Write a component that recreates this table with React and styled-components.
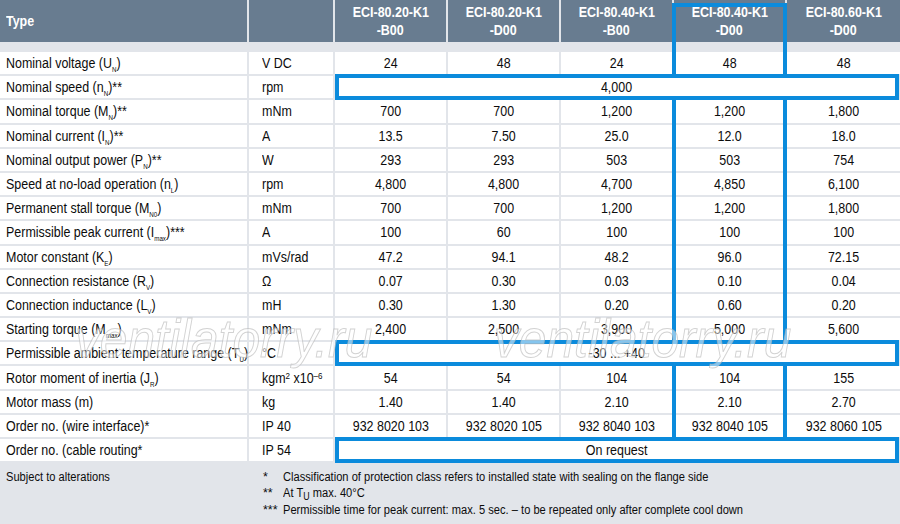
import React from "react";
import styled, { createGlobalStyle } from "styled-components";

const GlobalStyle = createGlobalStyle`
  html, body {
    margin: 0;
    padding: 0;
    background: #ffffff;
  }
  body {
    font-family: "Liberation Sans", Arial, sans-serif;
    color: #0c0c0c;
  }
`;

const BLUE = "#0b8bdc";
const GRID = "#e2e5ea";
const SLATE = "#687c90";

const models = [
  ["ECI-80.20-K1", "-B00"],
  ["ECI-80.20-K1", "-D00"],
  ["ECI-80.40-K1", "-B00"],
  ["ECI-80.40-K1", "-D00"],
  ["ECI-80.60-K1", "-D00"],
];

const rows = [
  { label: ["Nominal voltage (U", "N", ")"], unit: "V DC", values: ["24", "48", "24", "48", "48"] },
  { label: ["Nominal speed (n", "N", ")**"], unit: "rpm", merged: "4,000" },
  { label: ["Nominal torque (M", "N", ")**"], unit: "mNm", values: ["700", "700", "1,200", "1,200", "1,800"] },
  { label: ["Nominal current (I", "N", ")**"], unit: "A", values: ["13.5", "7.50", "25.0", "12.0", "18.0"] },
  { label: ["Nominal output power (P", "N", ")**"], unit: "W", values: ["293", "293", "503", "503", "754"] },
  { label: ["Speed at no-load operation (n", "L", ")"], unit: "rpm", values: ["4,800", "4,800", "4,700", "4,850", "6,100"] },
  { label: ["Permanent stall torque (M", "N0", ")"], unit: "mNm", values: ["700", "700", "1,200", "1,200", "1,800"] },
  { label: ["Permissible peak current (I", "max", ")***"], unit: "A", values: ["100", "60", "100", "100", "100"] },
  { label: ["Motor constant (K", "E", ")"], unit: "mVs/rad", values: ["47.2", "94.1", "48.2", "96.0", "72.15"] },
  { label: ["Connection resistance (R", "V", ")"], unit: "Ω", values: ["0.07", "0.30", "0.03", "0.10", "0.04"] },
  { label: ["Connection inductance (L", "V", ")"], unit: "mH", values: ["0.30", "1.30", "0.20", "0.60", "0.20"] },
  { label: ["Starting torque (M", "max", ")"], unit: "mNm", values: ["2,400", "2,500", "3,900", "5,000", "5,600"] },
  { label: ["Permissible ambient temperature range (T", "U", ")"], unit: "°C", merged: "-30 ... +40" },
  { label: ["Rotor moment of inertia (J", "R", ")"], unit: "inertia", values: ["54", "54", "104", "104", "155"] },
  { label: ["Motor mass (m)"], unit: "kg", values: ["1.40", "1.40", "2.10", "2.10", "2.70"] },
  { label: ["Order no. (wire interface)*"], unit: "IP 40", values: ["932 8020 103", "932 8020 105", "932 8040 103", "932 8040 105", "932 8060 105"] },
  { label: ["Order no. (cable routing*"], unit: "IP 54", merged: "On request" },
];

const Page = styled.div`
  width: 900px;
  height: 524px;
  background: ${GRID};
  overflow: hidden;
`;

const Table = styled.div`
  position: relative;
  display: grid;
  grid-template-columns: 247px 84px repeat(4, 111px) 1fr;
  grid-template-rows: 42px 6px repeat(17, 22.2px);
  gap: 2px;
  background: ${GRID};
  font-size: 14px;
  line-height: 1;
`;

/* condensed look: the reference uses a narrow grotesque */
const Narrow = styled.span`
  display: inline-block;
  white-space: nowrap;
  transform: scaleX(0.89);
  transform-origin: ${(p) => (p.$left ? "left center" : "center center")};
`;

const HeadCell = styled.div`
  background: ${SLATE};
  color: #ffffff;
  font-weight: bold;
  display: flex;
  flex-direction: column;
  justify-content: center;
  align-items: ${(p) => (p.$left ? "flex-start" : "center")};
  padding-left: ${(p) => (p.$left ? "6px" : "0")};
  line-height: 18px;
  font-size: 14px;
`;

const Strip = styled.div`
  grid-column: 1 / -1;
  background: ${GRID};
`;

const Cell = styled.div`
  background: #ffffff;
  display: flex;
  align-items: center;
  justify-content: ${(p) => (p.$align === "left" ? "flex-start" : "center")};
  padding-left: ${(p) => p.$pad || 0}px;
  white-space: nowrap;
`;

const MergedCell = styled.div`
  grid-column: 3 / -1;
  position: relative;
  z-index: 2;
  margin: -2px 1px -2px 0;
  border: 4px solid ${BLUE};
  background: #ffffff;
  display: flex;
  align-items: center;
  justify-content: center;
`;

const Sub = styled.span`
  font-size: ${(p) => p.$size || 7}px;
  position: relative;
  top: ${(p) => p.$drop || 4}px;
`;

const Sup = styled.span`
  font-size: 9px;
  position: relative;
  top: -4px;
`;

const ColumnMark = styled.div`
  position: absolute;
  left: 672px;
  top: 3px;
  width: 115px;
  height: 460px;
  box-sizing: border-box;
  border: 4px solid ${BLUE};
  z-index: 1;
  pointer-events: none;
`;

const Watermark = styled.div`
  position: absolute;
  top: 311px;
  left: ${(p) => p.$x}px;
  z-index: 3;
  font-family: "Liberation Sans", sans-serif;
  font-style: italic;
  font-size: 54px;
  line-height: 1;
  color: rgba(255, 255, 255, 0.5);
  -webkit-text-stroke: 1px rgba(180, 180, 180, 0.6);
  pointer-events: none;
  white-space: nowrap;
  transform: scaleX(0.92);
  transform-origin: left center;
`;

const Footer = styled.div`
  display: grid;
  grid-template-columns: 263px 1fr;
  padding-top: 8px;
  font-size: 12.5px;
  line-height: 16px;
`;

const FooterLeft = styled.div`
  padding-left: 6px;
`;

const Notes = styled.div`
  display: flex;
  flex-direction: column;
`;

const Note = styled.div`
  display: grid;
  grid-template-columns: 20px 1fr;
`;

const Label = ({ parts }) => (
  <Narrow $left>
    {parts[0]}
    {parts[1] && <Sub>{parts[1]}</Sub>}
    {parts[2]}
  </Narrow>
);

const Unit = ({ text }) => (
  <Narrow $left>
    {text === "inertia" ? (
      <>
        kgm<Sup>2</Sup> x10<Sup>–6</Sup>
      </>
    ) : (
      text
    )}
  </Narrow>
);

export default function App() {
  return (
    <Page>
      <GlobalStyle />
      <Table>
        <HeadCell $left>
          <Narrow $left>Type</Narrow>
        </HeadCell>
        <HeadCell />
        {models.map((m, i) => (
          <HeadCell key={i}>
            <Narrow>{m[0]}</Narrow>
            <Narrow>{m[1]}</Narrow>
          </HeadCell>
        ))}
        <Strip />
        {rows.map((r, i) => (
          <React.Fragment key={i}>
            <Cell $align="left" $pad={6}>
              <Label parts={r.label} />
            </Cell>
            <Cell $align="left" $pad={13}>
              <Unit text={r.unit} />
            </Cell>
            {r.merged ? (
              <MergedCell>
                <Narrow>{r.merged}</Narrow>
              </MergedCell>
            ) : (
              r.values.map((v, j) => (
                <Cell key={j}>
                  <Narrow>{v}</Narrow>
                </Cell>
              ))
            )}
          </React.Fragment>
        ))}
        <ColumnMark />
        <Watermark $x={75}>ventilatorry.ru</Watermark>
        <Watermark $x={494}>ventilatorry.ru</Watermark>
      </Table>
      <Footer>
        <FooterLeft>
          <Narrow $left>Subject to alterations</Narrow>
        </FooterLeft>
        <Notes>
          <Note>
            <span>*</span>
            <Narrow $left>Classification of protection class refers to installed state with sealing on the flange side</Narrow>
          </Note>
          <Note>
            <span>**</span>
            <Narrow $left>
              At T<Sub $size={10} $drop={3}>U</Sub> max. 40°C
            </Narrow>
          </Note>
          <Note>
            <span>***</span>
            <Narrow $left>Permissible time for peak current: max. 5 sec. – to be repeated only after complete cool down</Narrow>
          </Note>
        </Notes>
      </Footer>
    </Page>
  );
}
